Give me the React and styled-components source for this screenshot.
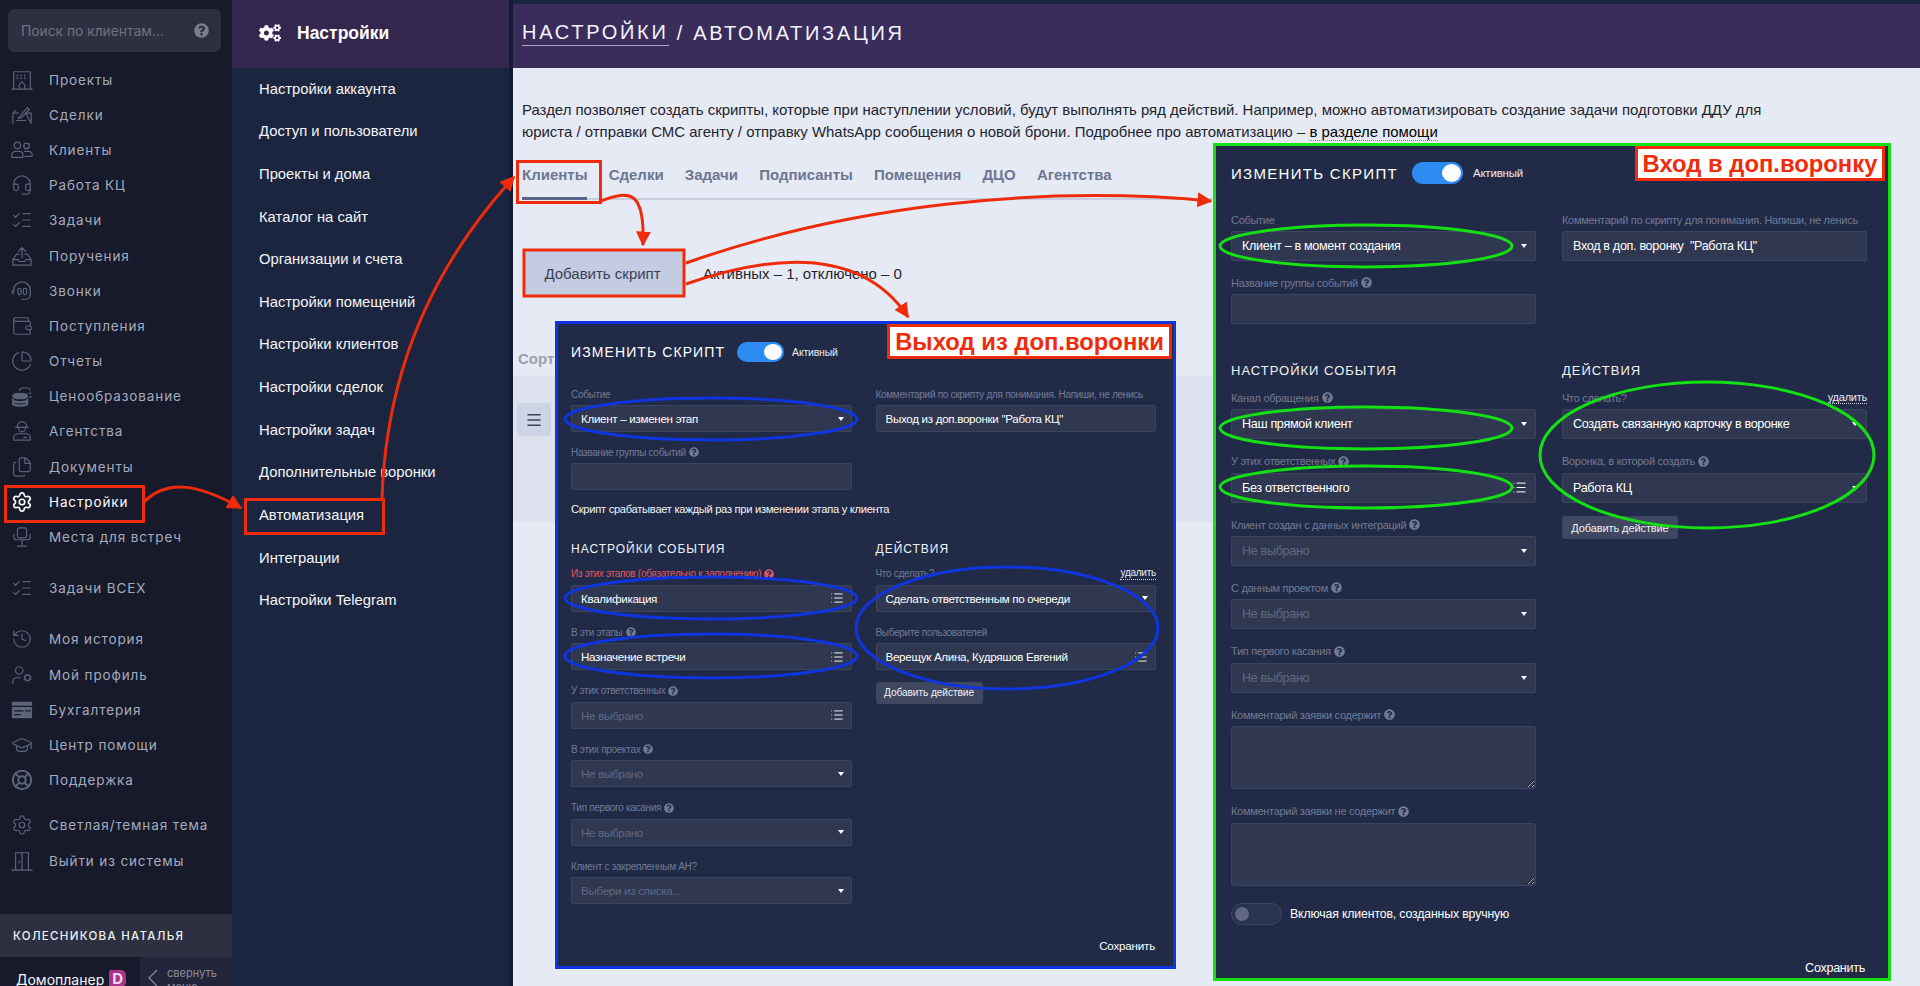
import React from 'react'
import styled, { createGlobalStyle } from 'styled-components'
import {
  Headset, ListChecks, Wallet, ChartPie, Files, Settings, History, UserCog,
  GraduationCap, LifeBuoy, List, Menu,
} from 'lucide-react'
import { FaCogs, FaQuestionCircle } from 'react-icons/fa'

const Global = createGlobalStyle`
  html, body { margin: 0; padding: 0; background: #e6eaf5; }
  * { box-sizing: border-box; }
  body { font-family: "Liberation Sans", Arial, sans-serif; }
`

const Page = styled.div`
  position: relative;
  display: flex;
  width: 1920px;
  height: 986px;
  overflow: hidden;
  background: #e6eaf5;
`

/* левое меню */
const Sidebar = styled.aside`
  flex: 0 0 232px;
  height: 986px;
  overflow: hidden;
  background: #161a2b;
  font-family: Inter, "Liberation Sans", sans-serif;
`
const SearchBox = styled.div`
  display: flex;
  align-items: center;
  justify-content: space-between;
  height: 43px;
  margin: 9px 11px 0 8px;
  padding: 0 12px 0 13px;
  border-radius: 6px;
  background: #2d3040;
  color: #70737f;
  font-size: 13.8px;
`
const Nav = styled.nav`
  height: 862px;
  padding-top: 10px;
`
const NavGroup = styled.div`
  margin-top: ${p => p.$gap || 0}px;
`
const NavItem = styled.div`
  display: flex;
  align-items: center;
  gap: 16px;
  height: 35.2px;
  padding-left: 11px;
  color: ${p => (p.$active ? '#ffffff' : '#a6aabd')};
  font-size: 13.5px;
  letter-spacing: 0.88px;
  svg {
    flex: 0 0 22px;
    color: ${p => (p.$active ? '#ffffff' : '#5f6377')};
  }
`
const UserBar = styled.div`
  display: flex;
  align-items: center;
  height: 43px;
  padding-left: 13px;
  background: #2d3040;
  color: #f0f1f5;
  font-size: 11.5px;
  font-weight: 500;
  letter-spacing: 1.3px;
`
const Footer = styled.div`
  display: flex;
  height: 60px;
`
const Brand = styled.div`
  display: flex;
  align-items: flex-start;
  flex: 0 0 140px;
  gap: 5px;
  padding: 14px 0 0 16px;
  color: #f4f4f7;
  font-size: 14px;
`
const BrandMark = styled.span`
  display: inline-block;
  width: 17px;
  height: 17px;
  margin-top: -1px;
  border-radius: 2px 5px 5px 2px;
  background: #a8358a;
  color: #f6d9ee;
  font-size: 15px;
  font-weight: 700;
  line-height: 17px;
  text-align: center;
`
const Collapse = styled.div`
  display: flex;
  flex: 1;
  gap: 9px;
  padding: 9px 0 0 8px;
  background: #23263a;
  color: #8a8d9c;
  font-size: 11px;
  line-height: 14px;
`

/* второе меню */
const SubMenu = styled.aside`
  flex: 0 0 281px;
  height: 986px;
  background: #1b2540;
  border-right: 4px solid #141c33;
`
const SubHead = styled.div`
  display: flex;
  align-items: center;
  gap: 16px;
  height: 68px;
  padding: 0 0 2px 27px;
  background: #33264f;
  color: #fff;
  font-size: 17.5px;
  font-weight: 700;
`
const SubList = styled.div`
  margin-top: -0.5px;
`
const SubItem = styled.div`
  display: flex;
  align-items: center;
  height: 42.62px;
  padding-left: 27px;
  color: #f4f5f8;
  font-size: 14.8px;
`

/* основная часть */
const Main = styled.main`
  flex: 1;
  min-width: 0;
  color: #23252d;
`
const TopBar = styled.header`
  display: flex;
  align-items: center;
  height: 68px;
  padding: 0 0 6px 9px;
  border-top: 4px solid #1b2540;
  background: #3a2d5c;
  color: #f4f4f8;
  font-size: 20px;
  letter-spacing: 2.7px;
  white-space: pre;
`
const Crumb = styled.span`
  border-bottom: 1px solid #a9a3c4;
  line-height: 25px;
`
const Content = styled.div`
  padding: 31px 0 0 9px;
`
const Intro = styled.p`
  width: 1270px;
  margin: 0;
  font-size: 14.95px;
  line-height: 22px;
  b {
    font-weight: 400;
    color: #000;
    border-bottom: 1px dotted #888;
  }
`
const Tabs = styled.div`
  display: flex;
  gap: 21.2px;
  width: 700px;
  height: 37px;
  margin-top: 20px;
  border-bottom: 2px solid #c9cfdf;
`
const Tab = styled.div`
  height: 37px;
  padding-top: 3px;
  border-bottom: 3px solid ${p => (p.$active ? '#5a6488' : 'transparent')};
  color: #6c7692;
  font-size: 15px;
  font-weight: 700;
`
const ActionRow = styled.div`
  display: flex;
  align-items: center;
  gap: 18px;
  margin-top: 51px;
  font-size: 15px;
`
const AddButton = styled.div`
  display: flex;
  align-items: center;
  justify-content: center;
  width: 161px;
  height: 44px;
  margin-left: 2px;
  padding-right: 4px;
  background: #c3cce0;
  color: #3a3f55;
`
const SortLabel = styled.div`
  margin: 55px 0 0 -4px;
  color: #9aa0ad;
  font-size: 15px;
  font-weight: 700;
  line-height: 18px;
`
const Band = styled.div`
  width: 760px;
  height: 146px;
  margin: 8px 0 0 -9px;
  padding: 27px 4px;
  background: #dde2ee;
`
const Burger = styled.div`
  display: flex;
  align-items: center;
  justify-content: center;
  width: 34px;
  height: 33px;
  border-radius: 3px;
  background: #cdd4e6;
  color: #3c4256;
`

/* панели скрипта */
const Panel = styled.section`
  position: absolute;
  left: ${p => p.$x}px;
  top: ${p => p.$y}px;
  z-index: 2;
  display: flex;
  flex-direction: column;
  width: ${p => p.$w}px;
  height: ${p => p.$h}px;
  padding: ${p => (p.$big ? '16px 21px 2px 15px' : '18px 17px 12px 13px')};
  border: 3px solid ${p => p.$line};
  background: #212b47;
  color: #fff;
  font-size: ${p => (p.$big ? 12.6 : 11.6)}px;
`
const PanelTitle = styled.div`
  display: flex;
  align-items: center;
  gap: ${p => (p.$big ? 14 : 12)}px;
  height: ${p => (p.$big ? 22 : 20)}px;
  font-size: ${p => (p.$big ? 15 : 14)}px;
  letter-spacing: ${p => (p.$big ? 1.3 : 1.1)}px;
  white-space: nowrap;
`
const Toggle = styled.span`
  position: relative;
  display: inline-block;
  flex: none;
  width: ${p => (p.$big ? 51 : 47)}px;
  height: ${p => (p.$big ? 22 : 20)}px;
  border: ${p => (p.$on ? 'none' : '1px solid #3f4860')};
  border-radius: 12px;
  background: ${p => (p.$on ? '#2c8cf4' : '#2a3450')};
  &::after {
    content: '';
    position: absolute;
    top: ${p => (p.$on ? 2 : 3)}px;
    left: ${p => (p.$on ? (p.$big ? 30 : 27) : 3)}px;
    width: ${p => (p.$on ? (p.$big ? 19 : 18) : 14)}px;
    height: ${p => (p.$on ? (p.$big ? 18 : 16) : 14)}px;
    border-radius: 50%;
    background: ${p => (p.$on ? '#fff' : '#5f6785')};
  }
`
const StateText = styled.span`
  margin-left: -4px;
  font-size: ${p => (p.$big ? 11.5 : 10.5)}px;
  letter-spacing: -0.2px;
  color: #e9ebf2;
`
const Columns = styled.div`
  display: grid;
  grid-template-columns: 1fr 1fr;
  column-gap: ${p => (p.$big ? 26 : 24)}px;
  margin-top: ${p => p.$top}px;
`
const Stack = styled.div`
  display: flex;
  flex-direction: column;
  gap: ${p => (p.$big ? 15.4 : 14.45)}px;
  min-width: 0;
`
const Field = styled.div`
  display: flex;
  flex-direction: column;
  gap: 5px;
`
const LabelRow = styled.div`
  display: flex;
  align-items: center;
  justify-content: space-between;
  height: ${p => (p.$big ? 13 : 12)}px;
`
const Label = styled.label`
  display: flex;
  align-items: center;
  gap: 3px;
  color: ${p => (p.$alert ? '#e0566a' : '#717a95')};
  font-size: ${p => (p.$big ? 11 : 10)}px;
  letter-spacing: -0.3px;
  white-space: nowrap;
`
const Remove = styled.span`
  border-bottom: 1px dotted #cfd3df;
  color: #e8eaf0;
  font-size: ${p => (p.$big ? 11 : 10)}px;
  letter-spacing: -0.25px;
  line-height: 12px;
`
const Control = styled.div`
  display: flex;
  align-items: center;
  justify-content: space-between;
  height: ${p => (p.$big ? 30 : 27)}px;
  padding: 0 ${p => (p.$big ? 8 : 7)}px 0 ${p => (p.$big ? 10 : 9)}px;
  border: 1px solid #3c4560;
  border-radius: 2px;
  background: #2f3850;
  color: ${p => (p.$muted ? '#5f6985' : '#fff')};
  letter-spacing: ${p => (p.$big ? -0.33 : -0.3)}px;
  white-space: pre;
`
const Caret = styled.i`
  width: 0;
  height: 0;
  border-left: 3.5px solid transparent;
  border-right: 3.5px solid transparent;
  border-top: 4px solid #fff;
`
const Area = styled.textarea`
  display: block;
  width: 100%;
  height: 63px;
  margin: 0;
  border: 1px solid #3c4560;
  border-radius: 3px;
  background: #2f3850;
  outline: none;
`
const Note = styled.div`
  margin-top: 12px;
  font-size: 11.2px;
  letter-spacing: -0.3px;
  line-height: 14px;
  color: #f2f3f7;
`
const Heading = styled.h3`
  height: 16px;
  margin: ${p => p.$top}px 0 ${p => p.$bottom}px;
  font-size: ${p => (p.$big ? 13 : 12)}px;
  font-weight: 400;
  letter-spacing: 1px;
  line-height: 16px;
  color: #f1f2f6;
`
const SmallButton = styled.div`
  display: flex;
  align-items: center;
  justify-content: center;
  width: ${p => (p.$big ? 116 : 107)}px;
  height: ${p => (p.$big ? 23 : 22)}px;
  margin-top: ${p => (p.$big ? -2 : -3)}px;
  border-radius: 3px;
  background: #3f4860;
  color: #f1f2f6;
  font-size: ${p => (p.$big ? 11 : 10.2)}px;
  letter-spacing: -0.1px;
`
const SwitchRow = styled.div`
  display: flex;
  align-items: center;
  gap: 8px;
  margin-top: 2px;
  font-size: 12.3px;
  letter-spacing: -0.15px;
`
const Save = styled.div`
  margin-top: auto;
  line-height: 16px;
  font-size: ${p => (p.$big ? 12.6 : 11.6)}px;
  letter-spacing: ${p => (p.$big ? -0.3 : -0.2)}px;
  text-align: right;
  padding-right: ${p => (p.$big ? 2 : 1)}px;
`

/* пометки поверх скриншота */
const Marks = styled.svg`
  position: absolute;
  left: 0;
  top: 0;
  z-index: 3;
  width: 1920px;
  height: 986px;
  pointer-events: none;
`
const Tag = styled.div`
  position: absolute;
  left: ${p => p.$x}px;
  top: ${p => p.$y}px;
  z-index: 4;
  display: flex;
  align-items: center;
  justify-content: center;
  width: ${p => p.$w}px;
  height: 35px;
  border: 3px solid #ee2c0c;
  background: #fff;
  color: #ee2c0c;
  font-size: 23.8px;
  font-weight: 700;
  white-space: nowrap;
`

const Ico = ({ children }) => (
  <svg width="22" height="22" viewBox="0 0 24 24" fill="none" stroke="currentColor" strokeWidth="1.3" strokeLinecap="round" strokeLinejoin="round">
    {children}
  </svg>
)
const lucide = { size: 22, strokeWidth: 1.3 }

const icons = {
  building: <Ico><path d="M3 3h18v19H3zM1 22h22M9 22v-5l3-3 3 3v5" /><path d="M7 7h.01M11 7h.01M15 7h.01M7 10h.01M11 10h.01M15 10h.01" strokeWidth="2" /></Ico>,
  deal: <Ico><path d="M2 21V10h6M16 10h6v11zM2 10l3-3" /><path d="M9 14l9-10 2 2-9 9-3 1zM6 18h10" /></Ico>,
  users: <Ico><circle cx="7" cy="7" r="3.5" /><circle cx="17" cy="7.5" r="3" /><path d="M1 20v-3c0-2 2-3.5 4-3.5h4c2 0 4 1.5 4 3.5v3zM15 13.5h4c2 0 4 1.500 4 3.500v2h-8" /></Ico>,
  inbox: <Ico><path d="M2 16l4-6h3M15 10h3l4 6v6H2v-6h6l1 2h6l1-2h6M12 14V3M8 7l4-4 4 4" /></Ico>,
  calls: <Ico><path d="M3 13v-2a9 9 0 0 1 18 0v5a5 5 0 0 1-5 5h-4" /><rect x="7.500" y="9" width="3.500" height="7" rx="1.700" /><rect x="13.500" y="9" width="3.500" height="7" rx="1.700" /><path d="M3 11a2 2 0 0 0 0 4" /></Ico>,
  coins: <Ico><ellipse cx="10" cy="12" rx="8" ry="3" fill="currentColor" /><path d="M2 16c0 1.700 3.500 3 8 3s8-1.300 8-3M2 19.500c0 1.700 3.500 3 8 3s8-1.300 8-3" strokeWidth="2.400" /><path d="M9 6c0-1.500 3-3 6-3s6 1 6 2.500M19 9h3M20 13h2" /></Ico>,
  agent: <Ico><path d="M7 8V6c0-2 2-4 5-4s5 2 5 4v2M5 8h14M8 8c0 3 2 5 4 5s4-2 4-5" /><path d="M3 22v-3c0-2 2-4 5-4h8c3 0 5 2 5 4v3zM14 19h3" /></Ico>,
  chair: <Ico><rect x="7" y="2" width="10" height="11" rx="2" /><path d="M3 9v3a3 3 0 0 0 3 3h12a3 3 0 0 0 3-3V9M12 15v5M7 22h10" /></Ico>,
  card: <Ico><path d="M1 3h22v18H1z" fill="currentColor" stroke="none" /><path d="M1 8h22" stroke="#161a2b" strokeWidth="1.500" /><path d="M4 13h9M16 13h5M4 17h6" stroke="#161a2b" strokeWidth="1.500" /></Ico>,
  door: <Ico><path d="M1 22h22M5 22V3h14v19M12 3v19M9 12v2" /></Ico>,
}

const navGroups = [
  { gap: 0, items: [
    ['Проекты', icons.building], ['Сделки', icons.deal], ['Клиенты', icons.users],
    ['Работа КЦ', <Headset {...lucide} />], ['Задачи', <ListChecks {...lucide} />], ['Поручения', icons.inbox],
    ['Звонки', icons.calls], ['Поступления', <Wallet {...lucide} />], ['Отчеты', <ChartPie {...lucide} />],
    ['Ценообразование', icons.coins], ['Агентства', icons.agent], ['Документы', <Files {...lucide} />],
    ['Настройки', <Settings size={22} strokeWidth={1.8} />, true], ['Места для встреч', icons.chair],
  ] },
  { gap: 16, items: [['Задачи ВСЕХ', <ListChecks {...lucide} />]] },
  { gap: 16, items: [
    ['Моя история', <History {...lucide} />], ['Мой профиль', <UserCog {...lucide} />], ['Бухгалтерия', icons.card],
    ['Центр помощи', <GraduationCap {...lucide} />], ['Поддержка', <LifeBuoy size={22} strokeWidth={2.2} />],
  ] },
  { gap: 10, items: [['Светлая/темная тема', <Settings {...lucide} />], ['Выйти из системы', icons.door]] },
]

const subItems = [
  'Настройки аккаунта', 'Доступ и пользователи', 'Проекты и дома', 'Каталог на сайт', 'Организации и счета',
  'Настройки помещений', 'Настройки клиентов', 'Настройки сделок', 'Настройки задач', 'Дополнительные воронки',
  'Автоматизация', 'Интеграции', 'Настройки Telegram',
]

const tabs = ['Клиенты', 'Сделки', 'Задачи', 'Подписанты', 'Помещения', 'ДЦО', 'Агентства']

function Box({ big, label, help, alert, extra, value, muted, kind = 'select' }) {
  return (
    <Field>
      <LabelRow $big={big}>
        <Label $big={big} $alert={alert}>
          {label}
          {help && <FaQuestionCircle size={big ? 11 : 10} />}
        </Label>
        {extra && <Remove $big={big}>{extra}</Remove>}
      </LabelRow>
      {kind === 'area' ? (
        <Area readOnly />
      ) : (
        <Control $big={big} $muted={muted}>
          <span>{value}</span>
          {kind === 'select' && <Caret />}
          {kind === 'list' && <List size={big ? 15 : 14} color="#fff" strokeWidth={1.6} />}
        </Control>
      )}
    </Field>
  )
}

function PanelHead({ big }) {
  return (
    <PanelTitle $big={big}>
      ИЗМЕНИТЬ СКРИПТ
      <Toggle $big={big} $on />
      <StateText $big={big}>Активный</StateText>
    </PanelTitle>
  )
}

function ExitPanel() {
  return (
    <Panel $x={555} $y={321} $w={621} $h={648} $line="#0f35e0">
      <PanelHead />
      <Columns $top={26}>
        <Stack>
          <Box label="Событие" value="Клиент – изменен этап" />
          <Box label="Название группы событий" help kind="text" />
        </Stack>
        <Stack>
          <Box label="Комментарий по скрипту для понимания. Напиши, не ленись" value={'Выход из доп.воронки "Работа КЦ"'} kind="text" />
        </Stack>
      </Columns>
      <Note>Скрипт срабатывает каждый раз при изменении этапа у клиента</Note>
      <Columns $top={24}>
        <Stack>
          <Heading $top={1} $bottom={-4}>НАСТРОЙКИ СОБЫТИЯ</Heading>
          <Box alert help label="Из этих этапов (обязательно к заполнению)" value="Квалификация" kind="list" />
          <Box help label="В эти этапы" value="Назначение встречи" kind="list" />
          <Box help muted label="У этих ответственных" value="Не выбрано" kind="list" />
          <Box help muted label="В этих проектах" value="Не выбрано" />
          <Box help muted label="Тип первого касания" value="Не выбрано" />
          <Box muted label="Клиент с закрепленным АН?" value="Выбери из списка..." />
        </Stack>
        <Stack>
          <Heading $top={1} $bottom={-4}>ДЕЙСТВИЯ</Heading>
          <Box label="Что сделать?" extra="удалить" value="Сделать ответственным по очереди" />
          <Box label="Выберите пользователей" value="Верещук Алина, Кудряшов Евгений" kind="list" />
          <SmallButton>Добавить действие</SmallButton>
        </Stack>
      </Columns>
      <Save>Сохранить</Save>
    </Panel>
  )
}

function EnterPanel() {
  return (
    <Panel $big $x={1213} $y={143} $w={678} $h={838} $line="#14e014">
      <PanelHead big />
      <Columns $big $top={29}>
        <Stack $big>
          <Box big label="Событие" value="Клиент – в момент создания" />
          <Box big label="Название группы событий" help kind="text" />
        </Stack>
        <Stack $big>
          <Box big label="Комментарий по скрипту для понимания. Напиши, не ленись" value={'Вход в доп. воронку  "Работа КЦ"'} kind="text" />
        </Stack>
      </Columns>
      <Columns $big $top={38}>
        <Stack $big>
          <Heading $big $top={1} $bottom={-3.500}>НАСТРОЙКИ СОБЫТИЯ</Heading>
          <Box big help label="Канал обращения" value="Наш прямой клиент" />
          <Box big help label="У этих ответственных" value="Без ответственного" kind="list" />
          <Box big help muted label="Клиент создан с данных интеграций" value="Не выбрано" />
          <Box big help muted label="С данным проектом" value="Не выбрано" />
          <Box big help muted label="Тип первого касания" value="Не выбрано" />
          <Box big help label="Комментарий заявки содержит" kind="area" />
          <Box big help label="Комментарий заявки не содержит" kind="area" />
          <SwitchRow>
            <Toggle $big />
            Включая клиентов, созданных вручную
          </SwitchRow>
        </Stack>
        <Stack $big>
          <Heading $big $top={1} $bottom={-3.500}>ДЕЙСТВИЯ</Heading>
          <Box big label="Что сделать?" extra="удалить" value="Создать связанную карточку в воронке" />
          <Box big help label="Воронка, в которой создать" value="Работа КЦ" />
          <SmallButton $big>Добавить действие</SmallButton>
        </Stack>
      </Columns>
      <Save $big>Сохранить</Save>
    </Panel>
  )
}

function Annotations() {
  const red = '#ee2c0c'
  return (
    <Marks viewBox="0 0 1920 986">
      <defs>
        <marker id="head" viewBox="0 0 10 10" refX="9" refY="5" markerWidth="15" markerHeight="15" markerUnits="userSpaceOnUse" orient="auto">
          <path d="M0 0L10 5L0 10z" fill={red} />
        </marker>
      </defs>
      <g fill="none" stroke={red} strokeWidth="3">
        <rect x="5.500" y="486.500" width="138" height="35" />
        <rect x="245.500" y="499.500" width="138" height="34" />
        <rect x="517.500" y="161.500" width="83" height="41" />
        <rect x="524" y="250" width="160" height="46" />
        <path d="M143 503C165 480 195 482 241 508" markerEnd="url(#head)" />
        <path d="M382 499C385 400 415 285 514 177" markerEnd="url(#head)" />
        <path d="M601 201C630 190 645 190 643 245" markerEnd="url(#head)" />
        <path d="M686 263C850 205 1040 185 1211 201" markerEnd="url(#head)" />
        <path d="M686 284C770 255 860 245 908 317" markerEnd="url(#head)" />
      </g>
      <g fill="none" stroke="#0f35e0" strokeWidth="3">
        <ellipse cx="711" cy="419" rx="146" ry="21" />
        <ellipse cx="711" cy="598" rx="146" ry="21" />
        <ellipse cx="711" cy="656" rx="146" ry="22" />
        <ellipse cx="1007" cy="628" rx="151" ry="61" />
      </g>
      <g fill="none" stroke="#14e014" strokeWidth="3">
        <ellipse cx="1366" cy="246" rx="146" ry="21" />
        <ellipse cx="1366" cy="428" rx="146" ry="21" />
        <ellipse cx="1366" cy="487" rx="146" ry="21" />
        <ellipse cx="1707" cy="455" rx="167" ry="73" />
      </g>
    </Marks>
  )
}

export default function App() {
  return (
    <Page>
      <Global />
      <Sidebar>
        <SearchBox>
          Поиск по клиентам...
          <FaQuestionCircle size={15} color="#7b7e8a" />
        </SearchBox>
        <Nav>
          {navGroups.map((g, i) => (
            <NavGroup key={i} $gap={g.gap}>
              {g.items.map(([name, icon, active]) => (
                <NavItem key={name} $active={active}>{icon}{name}</NavItem>
              ))}
            </NavGroup>
          ))}
        </Nav>
        <UserBar>КОЛЕСНИКОВА НАТАЛЬЯ</UserBar>
        <Footer>
          <Brand>Домопланер <BrandMark>D</BrandMark></Brand>
          <Collapse>
            <svg width="10" height="22" viewBox="0 0 10 22" fill="none" stroke="#8a8d9c" strokeWidth="1.200"><path d="M9 4L1 12l8 8" /></svg>
            <span>свернуть<br />меню</span>
          </Collapse>
        </Footer>
      </Sidebar>

      <SubMenu>
        <SubHead><FaCogs size={22} />Настройки</SubHead>
        <SubList>
          {subItems.map(s => <SubItem key={s}>{s}</SubItem>)}
        </SubList>
      </SubMenu>

      <Main>
        <TopBar><Crumb>НАСТРОЙКИ</Crumb> / АВТОМАТИЗАЦИЯ</TopBar>
        <Content>
          <Intro>
            Раздел позволяет создать скрипты, которые при наступлении условий, будут выполнять ряд действий. Например, можно автоматизировать создание задачи подготовки ДДУ для юриста / отправки СМС агенту / отправку WhatsApp сообщения о новой брони. Подробнее про автоматизацию – <b>в разделе помощи</b>
          </Intro>
          <Tabs>
            {tabs.map((t, i) => <Tab key={t} $active={i === 0}>{t}</Tab>)}
          </Tabs>
          <ActionRow>
            <AddButton>Добавить скрипт</AddButton>
            Активных – 1, отключено – 0
          </ActionRow>
          <SortLabel>Сортировка</SortLabel>
          <Band>
            <Burger><Menu size={18} strokeWidth={2} /></Burger>
          </Band>
        </Content>
      </Main>

      <ExitPanel />
      <EnterPanel />
      <Annotations />
      <Tag $x={887} $y={324} $w={285}>Выход из доп.воронки</Tag>
      <Tag $x={1635} $y={146} $w={250}>Вход в доп.воронку</Tag>
    </Page>
  )
}
